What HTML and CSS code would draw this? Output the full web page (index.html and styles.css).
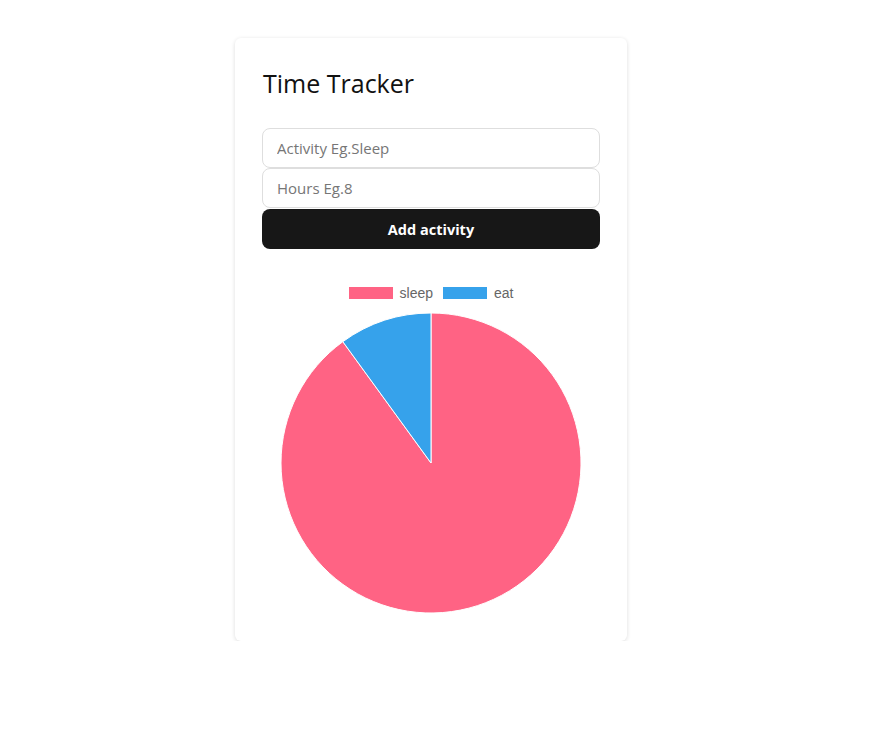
FILE: index.html
```html
<!DOCTYPE html>
<html>
<head>
<meta charset="utf-8">
<link rel="stylesheet" href="styles.css">
</head>
<body>
<div class="card">
  <h1 class="title">Time Tracker</h1>
  <form class="form">
    <input class="field" type="text" placeholder="Activity Eg.Sleep">
    <input class="field" type="text" placeholder="Hours Eg.8">
    <button class="btn" type="button">Add activity</button>
  </form>
  <div class="chart">
    <div class="legend">
      <span class="legend-item"><span class="swatch swatch-sleep"></span>sleep</span>
      <span class="legend-item"><span class="swatch swatch-eat"></span>eat</span>
    </div>
    <svg class="pie" width="302" height="302" viewBox="-151 -151 302 302">
      <path d="M0 0 L0 -150 A150 150 0 1 1 -88.17 -121.35 Z" fill="#ff6384" stroke="#fff" stroke-width="1"/>
      <path d="M0 0 L-88.17 -121.35 A150 150 0 0 1 0 -150 Z" fill="#36a2eb" stroke="#fff" stroke-width="1"/>
    </svg>
  </div>
</div>
</body>
</html>
```
FILE: styles.css
```css
html, body {
  margin: 0;
  padding: 0;
  background: #fff;
}
body {
  font-family: "Open Sans", "Noto Sans", sans-serif;
  padding: 38px 0 0 235px;
}
.card {
  width: 338px;
  padding: 27px;
  border-radius: 6px;
  background: #fff;
  box-shadow: 0 1px 4px rgba(0,0,0,0.14);
}
.title {
  margin: 0 0 27px 1px;
  font-weight: 400;
  font-size: 25px;
  line-height: 36px;
  color: #111;
}
.form {
  display: flex;
  flex-direction: column;
  margin: 0;
}
.field {
  box-sizing: border-box;
  height: 40px;
  width: 100%;
  border: 1px solid #dedede;
  border-radius: 8px;
  padding: 0 14px;
  font-family: inherit;
  font-size: 15px;
  color: #333;
  margin: 0;
}
.field::placeholder {
  color: #767676;
}
.btn {
  height: 40px;
  margin-top: 1px;
  border: none;
  border-radius: 8px;
  background: #171717;
  color: #fff;
  font-family: inherit;
  font-weight: 700;
  font-size: 14.5px;
}
.chart {
  margin-top: 37px;
  display: flex;
  flex-direction: column;
  align-items: center;
}
.legend {
  display: flex;
  gap: 10px;
  font-family: "Liberation Sans", Arial, sans-serif;
  font-size: 14px;
  color: #666;
  height: 14px;
  line-height: 14px;
}
.legend-item {
  display: flex;
  align-items: center;
  gap: 7px;
}
.swatch {
  width: 44px;
  height: 12px;
  box-sizing: border-box;
}
.swatch-sleep { background: #ff6384; border: 1px solid #ff6384; }
.swatch-eat { background: #36a2eb; border: 1px solid #36a2eb; }
.pie {
  display: block;
  margin-top: 12px;
}
```
